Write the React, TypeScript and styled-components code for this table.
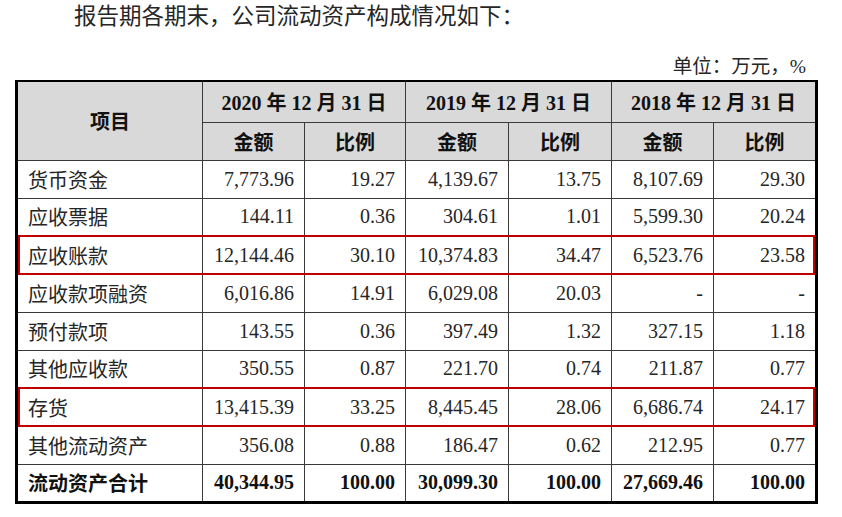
import styled, { createGlobalStyle, css } from "styled-components";

const GlobalStyle = createGlobalStyle`
  body {
    margin: 0;
    background: #ffffff;
    font-family: "Liberation Serif", "Noto Sans CJK SC", serif;
    color: #1c1c1c;
  }
`;

const Page = styled.div`
  width: 842px;
  height: 517px;
  overflow: hidden;
`;

const Intro = styled.p`
  margin: 0 0 0 74px;
  font-size: 22.5px;
  line-height: 34px;
  color: #262626;
  white-space: nowrap;
`;

const Unit = styled.div`
  margin: 21px 0 0 15px;
  width: 803px;
  padding-right: 12px;
  box-sizing: border-box;
  text-align: right;
  font-size: 19.5px;
  line-height: 24px;
  color: #262626;
`;

const TableWrap = styled.div`
  margin: 1px 0 0 15px;
`;

const Table = styled.table`
  border-collapse: collapse;
  table-layout: fixed;
  width: 803px;
  border: 3px solid #000;
  border-top-width: 2px;
  font-size: 20px;
`;

const HeadCell = styled.th`
  background: #d9d9d9;
  border: 1px solid #3a3a3a;
  font-weight: 700;
  text-align: center;
  vertical-align: middle;
  padding: 0;
  color: #111;
  white-space: nowrap;
`;

const HeadRow = styled.tr<{ $h: number }>`
  height: ${(p) => p.$h}px;
`;

const Cell = styled.td<{ $num?: boolean; $bold?: boolean }>`
  border: 1px solid #3a3a3a;
  padding: ${(p) => (p.$num ? "0 10px 0 0" : "0 0 0 10px")};
  text-align: ${(p) => (p.$num ? "right" : "left")};
  font-weight: ${(p) => (p.$bold ? 700 : 400)};
  color: ${(p) => (p.$bold ? "#111" : "#262626")};
  vertical-align: middle;
  white-space: nowrap;
`;

const Row = styled.tr<{ $mark?: boolean }>`
  height: 38px;

  ${(p) =>
    p.$mark &&
    css`
      & > td {
        border-top: 2px solid #c00000;
        border-bottom: 2px solid #c00000;
      }
      & > td:first-child {
        box-shadow: inset 2px 0 #c00000;
      }
      & > td:last-child {
        box-shadow: inset -2px 0 #c00000;
      }
    `}
`;

type Line = {
  name: string;
  values: string[];
  mark?: boolean;
  total?: boolean;
};

const lines: Line[] = [
  { name: "货币资金", values: ["7,773.96", "19.27", "4,139.67", "13.75", "8,107.69", "29.30"] },
  { name: "应收票据", values: ["144.11", "0.36", "304.61", "1.01", "5,599.30", "20.24"] },
  { name: "应收账款", values: ["12,144.46", "30.10", "10,374.83", "34.47", "6,523.76", "23.58"], mark: true },
  { name: "应收款项融资", values: ["6,016.86", "14.91", "6,029.08", "20.03", "-", "-"] },
  { name: "预付款项", values: ["143.55", "0.36", "397.49", "1.32", "327.15", "1.18"] },
  { name: "其他应收款", values: ["350.55", "0.87", "221.70", "0.74", "211.87", "0.77"] },
  { name: "存货", values: ["13,415.39", "33.25", "8,445.45", "28.06", "6,686.74", "24.17"], mark: true },
  { name: "其他流动资产", values: ["356.08", "0.88", "186.47", "0.62", "212.95", "0.77"] },
  { name: "流动资产合计", values: ["40,344.95", "100.00", "30,099.30", "100.00", "27,669.46", "100.00"], total: true },
];

const years = ["2020", "2019", "2018"];
const widths = [186, 102, 101, 103, 103, 102, 103];

export default function App() {
  return (
    <Page>
      <GlobalStyle />
      <Intro>报告期各期末，公司流动资产构成情况如下：</Intro>
      <Unit>单位：万元，%</Unit>
      <TableWrap>
        <Table>
          <colgroup>
            {widths.map((w, i) => (
              <col key={i} style={{ width: w }} />
            ))}
          </colgroup>
          <thead>
            <HeadRow $h={41}>
              <HeadCell rowSpan={2}>项目</HeadCell>
              {years.map((y) => (
                <HeadCell key={y} colSpan={2}>
                  {y} 年 12 月 31 日
                </HeadCell>
              ))}
            </HeadRow>
            <HeadRow $h={38}>
              {years.map((y) => [
                <HeadCell key={y + "a"}>金额</HeadCell>,
                <HeadCell key={y + "b"}>比例</HeadCell>,
              ])}
            </HeadRow>
          </thead>
          <tbody>
            {lines.map((l) => (
              <Row key={l.name} $mark={l.mark}>
                <Cell $bold={l.total}>{l.name}</Cell>
                {l.values.map((v, i) => (
                  <Cell key={i} $num $bold={l.total}>
                    {v}
                  </Cell>
                ))}
              </Row>
            ))}
          </tbody>
        </Table>
      </TableWrap>
    </Page>
  );
}
